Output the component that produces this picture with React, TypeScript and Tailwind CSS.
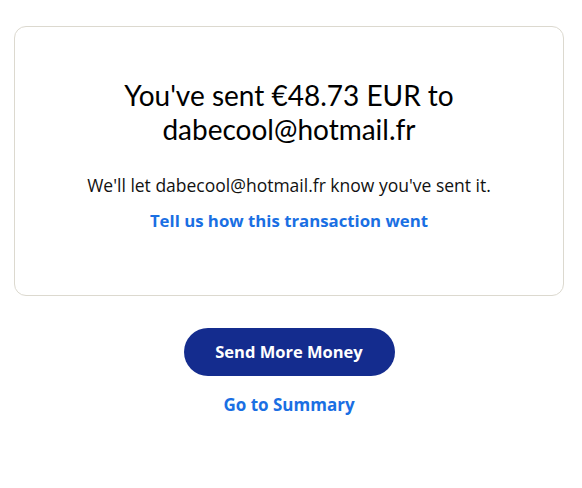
const App = () => {
    return (
        <div className="min-h-screen bg-white px-[14px] pt-[26px] font-['Open_Sans',sans-serif] text-black">
            <div className="w-[550px] h-[270px] rounded-[12px] border border-[#dcd9cf] flex flex-col items-center pt-[51px]">
                <h1 className="font-['Lato',sans-serif] text-[28px] leading-[34px] text-center text-[#000000] w-[380px]">
                    You've sent €48.73 EUR to dabecool@hotmail.fr
                </h1>
                <p className="mt-[28px] text-[17.5px] leading-[22px] text-[#111111]">
                    We'll let dabecool@hotmail.fr know you've sent it.
                </p>
                <a href="#" className="mt-[14px] text-[16.8px] leading-[22px] font-bold text-[#1a6fe3]">
                    Tell us how this transaction went
                </a>
            </div>
            <div className="flex flex-col items-center mt-[32px] w-[550px]">
                <button className="w-[211px] h-[48px] rounded-full bg-[#142c8e] text-white font-bold text-[16.5px]">
                    Send More Money
                </button>
                <a href="#" className="mt-[18px] text-[17px] leading-[22px] font-bold text-[#1a6fe3]">
                    Go to Summary
                </a>
            </div>
        </div>
    );
};

export default App;
